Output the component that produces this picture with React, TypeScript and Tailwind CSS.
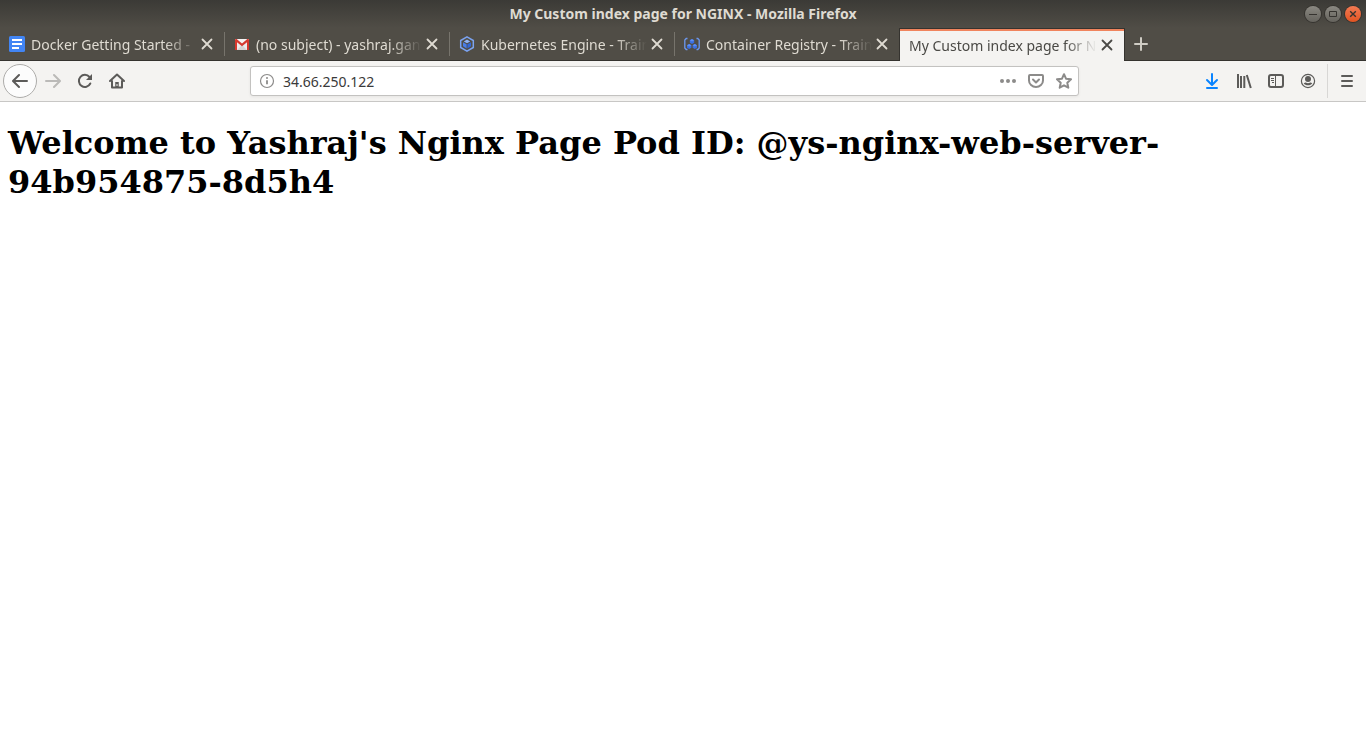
import type { ReactNode } from "react";

const DocsIcon = () => (
  <svg width="16" height="16" viewBox="0 0 16 16" aria-hidden="true">
    <rect width="16" height="16" rx="1.5" fill="#4285f4" />
    <path d="M3 3h10v2H3zM3 7h10v2H3zM3 11h7v2H3z" fill="#fff" />
  </svg>
);

const GmailIcon = () => (
  <svg width="16" height="16" viewBox="0 0 16 16" aria-hidden="true">
    <path d="M1 3h14v11H1z" fill="#eceaea" />
    <path d="M3 14l5-5 5 5z" fill="#d5d3d3" />
    <path d="M3 3l5 4.5L13 3z" fill="#f7f4f3" />
    <path d="M1 14V4c0-.7.4-1 1-1h.6L8 7.6 13.400 3h.6c.6 0 1 .3 1 1v10h-2V6.200L8 10.300 3 6.200V14z" fill="#d5382e" />
  </svg>
);

const KubernetesIcon = () => (
  <svg width="16" height="16" viewBox="0 0 16 16" aria-hidden="true">
    <path d="M8 .9l6.300 3.600v7L8 15.100l-6.300-3.600v-7z" fill="none" stroke="#7ba3f0" strokeWidth="1.500" />
    <path d="M8 3.600l3.200 1.800L8 7.200 4.800 5.400z" fill="#8fb3f7" />
    <path d="M4 6.200l3.600 2v4.200L4 10.300z" fill="#4a7ee8" />
    <path d="M12 6.200l-3.600 2v4.200l3.600-2.100z" fill="#3367d6" />
  </svg>
);

const RegistryIcon = () => (
  <svg width="16" height="16" viewBox="0 0 16 16" aria-hidden="true">
    <path d="M3.500 2.500H2.200L.8 4v8l1.400 1.500h1.300M12.500 2.500h1.300L15.200 4v8l-1.400 1.500h-1.300" fill="none" stroke="#6d98ee" strokeWidth="1.300" />
    <path d="M8 3l2.200 1.200v2.500L8 8 5.800 6.700V4.200zM5.200 8l2.200 1.200v2.500L5.200 13 3 11.700V9.200zM10.800 8L13 9.200v2.500L10.800 13l-2.200-1.300V9.200z" fill="#3a6fe0" />
    <path d="M8 3l2.200 1.200L8 5.400 5.800 4.200zM5.200 8l2.200 1.200-2.200 1.200L3 9.200zM10.800 8L13 9.200l-2.200 1.200-2.200-1.200z" fill="#5f8ff0" />
  </svg>
);

function Glyph({ children }: { children: ReactNode }) {
  return (
    <svg width="16" height="16" viewBox="0 0 16 16" fill="none" stroke="currentColor" strokeWidth="2" strokeLinecap="round" strokeLinejoin="round" aria-hidden="true">
      {children}
    </svg>
  );
}

function ToolButton({ label, className = "", children }: { label: string; className?: string; children: ReactNode }) {
  return (
    <button type="button" aria-label={label} className={`flex h-8 w-8 shrink-0 items-center justify-center ${className}`}>
      <Glyph>{children}</Glyph>
    </button>
  );
}

type TabData = { title: string; icon?: ReactNode; active?: boolean; divider?: boolean };

const tabs: TabData[] = [
  { title: "Docker Getting Started -", icon: <DocsIcon />, divider: true },
  { title: "(no subject) - yashraj.gan", icon: <GmailIcon />, divider: true },
  { title: "Kubernetes Engine - Train", icon: <KubernetesIcon />, divider: true },
  { title: "Container Registry - Train", icon: <RegistryIcon /> },
  { title: "My Custom index page for NGINX", active: true },
];

function Tab({ title, icon, active, divider }: TabData) {
  return (
    <div
      className={
        active
          ? "-ml-px flex w-[226px] items-center border-x border-t border-[#35332f] bg-[#f4f3f1] pr-[7px] pl-[9px] text-[#4a4945] shadow-[inset_0_2px_0_#f0845d]"
          : "flex w-[225px] items-center border-b border-[#35332f] pl-[9px] text-[#dfdbd2]"
      }
    >
      <button type="button" className="flex min-w-0 flex-1 items-center gap-[6px] text-left">
        {icon && <span className="shrink-0">{icon}</span>}
        <span className="min-w-0 flex-1 overflow-hidden pt-px leading-5 whitespace-nowrap [mask-image:linear-gradient(to_left,transparent,black_32px)]">{title}</span>
      </button>
      <button type="button" aria-label={`Close ${title}`} className="flex h-4 w-5 shrink-0 items-center justify-center">
        <Glyph>
          <path d="M3.500 3.500l9 9M12.500 3.500l-9 9" strokeWidth="1.800" />
        </Glyph>
      </button>
      {!active && <span className={divider ? "ml-[7px] h-6 w-px bg-[#77746c]" : "ml-[7px] w-px"} />}
    </div>
  );
}

function WindowControl({ label, className, children }: { label: string; className: string; children: ReactNode }) {
  return (
    <button type="button" aria-label={label} className={`flex h-4 w-4 items-center justify-center rounded-full shadow-[0_0_0_1px_#35332f] ${className}`}>
      <svg width="16" height="16" viewBox="0 0 16 16" fill="none" stroke="#35332f" aria-hidden="true">
        {children}
      </svg>
    </button>
  );
}

export default function App() {
  return (
    <div className="flex min-h-screen flex-col bg-white font-['Noto_Sans',sans-serif] text-sm">
      <header>
        <div className="bg-[linear-gradient(#3b3a36,#504d46_28px)]">
          <div className="grid h-7 grid-cols-[1fr_auto_1fr] items-center">
            <span />
            <p className="font-bold text-[#dfdbd2]">My Custom index page for NGINX - Mozilla Firefox</p>
            <div className="flex justify-end gap-1 pr-[5px]">
              <WindowControl label="Minimize" className="bg-linear-to-b from-[#8b8982] to-[#65635d]">
                <path d="M4 8.500h8" />
              </WindowControl>
              <WindowControl label="Maximize" className="bg-linear-to-b from-[#8b8982] to-[#65635d]">
                <path d="M4.500 5.500h7v5h-7z" />
              </WindowControl>
              <WindowControl label="Close" className="bg-linear-to-b from-[#f37a52] to-[#e2531f]">
                <path d="M5.200 5.200l5.600 5.600M10.800 5.200l-5.600 5.600" strokeWidth="1.400" />
              </WindowControl>
            </div>
          </div>
          <nav aria-label="Tabs" className="flex h-[33px]">
            {tabs.map((tab) => (
              <Tab key={tab.title} {...tab} />
            ))}
            <div className="flex flex-1 items-center border-b border-[#35332f] pl-2 text-[#cfccc4]">
              <button type="button" aria-label="New tab">
                <Glyph>
                  <path d="M8 2v12M2 8h12" />
                </Glyph>
              </button>
            </div>
          </nav>
        </div>

        <div className="flex h-[41px] items-center border-b border-[#c8c7c5] bg-[#f4f3f1] pl-[3px] text-[#5c5b59]">
          <button type="button" aria-label="Back" className="flex h-[34px] w-[34px] shrink-0 items-center justify-center rounded-full border border-[#adacaa] bg-[#fcfcfc]">
            <Glyph>
              <path d="M15 8H1.500M7 2L1 8l6 6" />
            </Glyph>
          </button>
          <ToolButton label="Forward" className="text-[#bbbab8]">
            <path d="M1 8h13.500M9 2l6 6-6 6" />
          </ToolButton>
          <ToolButton label="Reload">
            <path d="M13.300 10.500A6 6 0 1 1 12.500 4" />
            <path d="M15 1v6H9z" fill="currentColor" stroke="none" />
          </ToolButton>
          <ToolButton label="Home">
            <path d="M1 8l7-6.500L15 8M3 8v6.500h10V8" />
            <path d="M8 9v5" strokeWidth="3.500" strokeLinecap="butt" />
            <path d="M8 11v2" stroke="#f4f3f1" strokeWidth="1" strokeLinecap="butt" />
          </ToolButton>
          <div className="flex-[117_1_0]" />
          <div className="flex h-[30px] flex-[813_1_0] items-center rounded-[3px] border border-[#c3c2c0] bg-white pr-[6px] pl-2 text-[#8c8b8a] shadow-[0_1px_3px_rgba(0,0,0,0.06)]">
            <button type="button" aria-label="Site information" className="mr-2 shrink-0">
              <Glyph>
                <circle cx="8" cy="8" r="6.500" strokeWidth="1.200" />
                <path d="M8 7.200v4" strokeLinecap="butt" strokeWidth="1.800" />
                <circle cx="8" cy="4.900" r="1" fill="currentColor" stroke="none" />
              </Glyph>
            </button>
            <input aria-label="Address" defaultValue="34.66.250.122" className="min-w-0 flex-1 bg-transparent pt-px text-sm text-[#3a3a3a] outline-none" />
            <div className="flex shrink-0 items-center gap-3">
              <button type="button" aria-label="Page actions">
                <Glyph>
                  <g fill="currentColor" stroke="none">
                    <circle cx="2" cy="8" r="2" />
                    <circle cx="8" cy="8" r="2" />
                    <circle cx="14" cy="8" r="2" />
                  </g>
                </Glyph>
              </button>
              <button type="button" aria-label="Save to Pocket">
                <Glyph>
                  <path d="M2 2h12a1 1 0 0 1 1 1v4.500a7 6.500 0 0 1-14 0V3a1 1 0 0 1 1-1z" />
                  <path d="M5 6.500l3 3 3-3" />
                </Glyph>
              </button>
              <button type="button" aria-label="Bookmark this page">
                <Glyph>
                  <path d="M8 1.200l2 4.500 5 .6-3.700 3.400 1 5L8 12.300l-4.300 2.400 1-5L1 6.300l5-.6z" />
                </Glyph>
              </button>
            </div>
          </div>
          <div className="flex-[117_1_0]" />
          <ToolButton label="Downloads" className="text-[#0a84ff]">
            <path d="M8 1v10M3 7l5 5 5-5M3 15h10" />
          </ToolButton>
          <ToolButton label="Library">
            <path d="M2 1v14M5 3v12M8.300 3v12M10.800 2l4 13" strokeLinecap="butt" />
          </ToolButton>
          <ToolButton label="Sidebars">
            <rect x="1" y="2" width="14" height="12" rx="2" />
            <path d="M7.500 2v12M3 5.500h3M3 7.500h3M4 9.500h2" strokeWidth="1" strokeLinecap="butt" />
          </ToolButton>
          <ToolButton label="Account">
            <circle cx="8" cy="8" r="6.600" strokeWidth="1.200" />
            <circle cx="8" cy="6" r="3" fill="currentColor" stroke="none" />
            <path d="M3.700 10.300c1.300-.8 2-.8 2.600-.5 1.100.6 2.300.6 3.400 0 .6-.3 1.300-.3 2.600.5-1 2.200-6.600 3.200-8.600 0z" fill="currentColor" stroke="none" />
          </ToolButton>
          <span className="ml-[3px] h-[34px] w-px bg-[#d8d7d5]" />
          <button type="button" aria-label="Open menu" className="flex h-8 w-[38px] shrink-0 items-center justify-center">
            <Glyph>
              <path d="M3 3h10M3 8h10M3 13h10" />
            </Glyph>
          </button>
        </div>
      </header>

      <main className="flex-1 px-2 pt-[22px]">
        <h1 className="font-['DejaVu_Serif',serif] text-[32px] leading-[39px] font-bold text-black">
          Welcome to Yashraj's Nginx Page Pod ID: @ys-nginx-web-server-
          <wbr />
          94b954875-8d5h4
        </h1>
      </main>
    </div>
  );
}
